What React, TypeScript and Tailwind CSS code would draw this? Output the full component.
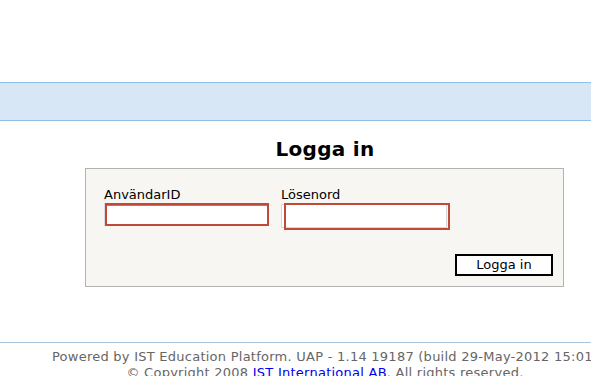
export default function App() {
  return (
    <div className="h-[376px] w-[591px] overflow-hidden bg-white font-['DejaVu_Sans',Verdana,sans-serif] text-[13px] leading-[16px] text-black">
      <div className="w-[650px]">
        <div className="h-[82px]" />
        <div className="h-[39px] border-y border-[#8fbde3] bg-[#d7e7f5]" />

        <h1 className="mt-[16px] text-center text-[20px] font-bold leading-[24px] tracking-[0.3px]">Logga in</h1>

        <div className="ml-[85px] mt-[7px] flex h-[119px] w-[479px] flex-col border border-[#b3b3b3] bg-[#f7f6f3] pl-[18px] pr-[10px] pt-[18px]">
          <div className="flex">
            <div className="w-[177px]">
              <label className="block">AnvändarID</label>
              <input
                type="text"
                className="ml-px block h-[23px] w-[164px] border-2 border-[#c0493a] bg-white shadow-[inset_0_1px_0_#5b8fc7,-1px_0_0_#dcdcdc] outline-none"
              />
            </div>
            <div>
              <label className="block">Lösenord</label>
              <div className="relative mt-px">
                <input
                  type="password"
                  className="block h-[24px] w-[166px] border border-[#d5d9de] bg-white outline-none"
                />
                <span className="pointer-events-none absolute left-[3px] top-[-1px] h-[27px] w-[166px] border-2 border-[#c0493a]" />
              </div>
            </div>
          </div>
          <div className="mt-auto flex justify-end pb-[10px]">
            <button className="h-[22px] w-[98px] border-2 border-black bg-white text-[13px] leading-[16px] text-black">
              Logga in
            </button>
          </div>
        </div>

        <div className="mt-[55px] border-t border-[#a9c6df] pt-[6px] text-center tracking-[0.25px] text-[#666]">
          <p className="whitespace-nowrap">Powered by IST Education Platform. UAP - 1.14 19187 (build 29-May-2012 15:01)</p>
          <p className="whitespace-nowrap">
            © Copyright 2008 <a className="text-[#0000ee]">IST International AB</a>. All rights reserved.
          </p>
        </div>
      </div>
    </div>
  );
}
